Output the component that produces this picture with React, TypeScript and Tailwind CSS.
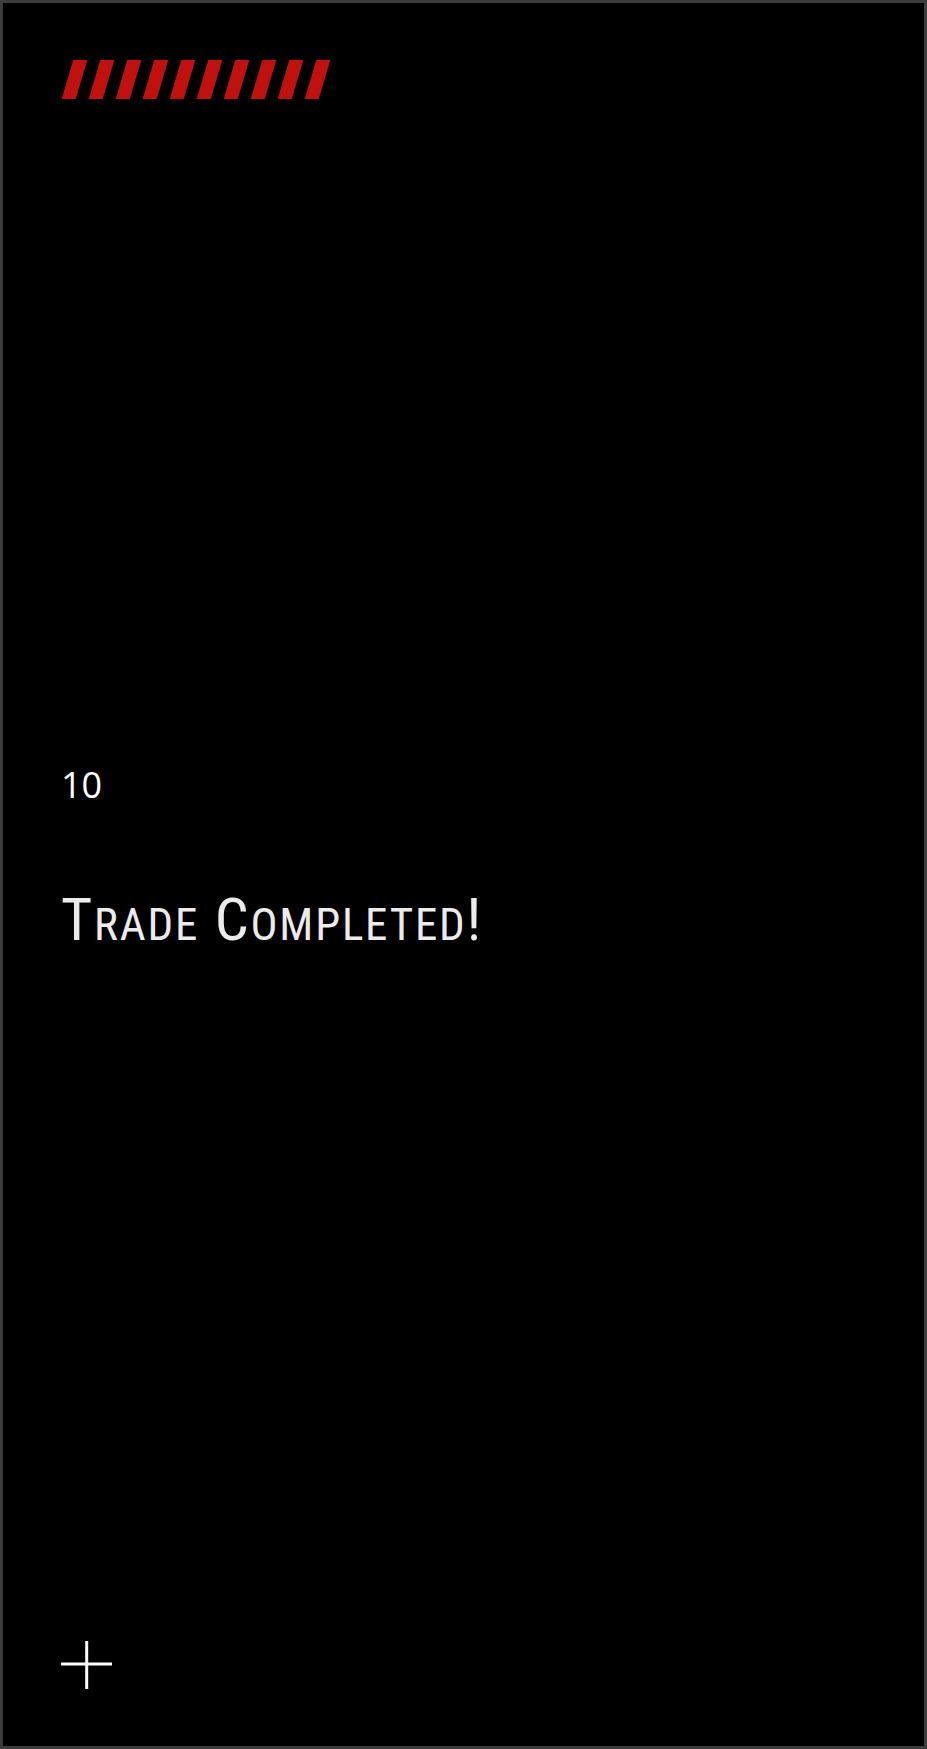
import React from "react";

function Stripes() {
  const polys = Array.from({ length: 10 }, (_, i) => {
    const o = 27 * i + 0.7;
    return `${o + 11.6},0 ${o + 25.6},0 ${o + 14},39 ${o},39`;
  });
  return (
    <svg width="272" height="39" viewBox="0 0 272 39" className="block">
      {polys.map((p, i) => (
        <polygon key={i} points={p} fill="#c1110f" />
      ))}
    </svg>
  );
}

function Plus() {
  return (
    <svg width="52" height="48" viewBox="0 0 52 48" className="block">
      <line x1="0" y1="23" x2="51" y2="23" stroke="#ffffff" strokeWidth="3" />
      <line x1="25.7" y1="0" x2="25.7" y2="48" stroke="#ffffff" strokeWidth="3" />
    </svg>
  );
}

export default function App() {
  const titleFont = {
    fontFamily: '"Roboto Condensed", "DejaVu Sans Condensed", "Liberation Sans", sans-serif',
    fontStretch: "condensed",
  } as React.CSSProperties;
  return (
    <div className="w-full h-[1749px] bg-black border-[3px] border-[#3c3c3c] flex flex-col pl-[58px]">
      <div className="mt-[57px]">
        <Stripes />
      </div>
      <div
        className="mt-[668px] text-[36px] leading-none text-white font-normal"
        style={{ fontFamily: '"Open Sans", "Noto Sans", sans-serif' }}
      >
        10
      </div>
      <h1
        className="mt-[87px] text-[60px] leading-none text-[#ebebeb] font-normal tracking-[1.8px] uppercase"
        style={titleFont}
      >
        T<span className="text-[45px]">rade</span> C<span className="text-[45px]">ompleted</span>!
      </h1>
      <div className="mt-auto mb-[57px]">
        <Plus />
      </div>
    </div>
  );
}
